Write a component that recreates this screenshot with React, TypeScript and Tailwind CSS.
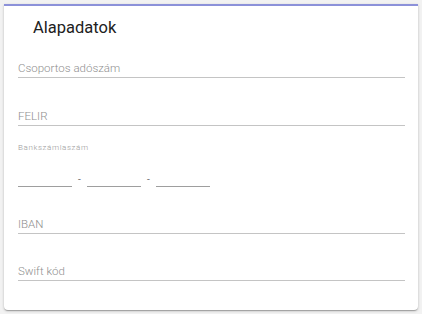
import React from "react";

const Field: React.FC<{ label: string; className?: string }> = ({ label, className }) => (
  <div className={`border-b border-[#c4c4c4] pb-[1px] ${className ?? ""}`}>
    <div className="text-[11.5px] leading-4 font-light text-[#8f8f8f]">{label}</div>
  </div>
);

const App: React.FC = () => {
  const segments = [0, 1, 2];

  return (
    <div
      className="w-[422px] h-[314px] bg-[#f2f2f2] p-1"
      style={{ fontFamily: "Roboto, 'Liberation Sans', sans-serif" }}
    >
      <div className="h-[306px] bg-white border-t-2 border-[#8c91d9] rounded-b-sm shadow-[0_1px_3px_rgba(0,0,0,0.2),0_1px_1px_rgba(0,0,0,0.14),0_2px_1px_-1px_rgba(0,0,0,0.12)] pl-[14px] pr-[13px]">
        <h2 className="pt-3 pl-[15px] text-[16.5px] leading-5 text-[#212121] font-normal">Alapadatok</h2>

        <Field label="Csoportos adószám" className="mt-[22px]" />
        <Field label="FELIR" className="mt-[30px]" />

        <div className="mt-[17px] text-[8px] leading-[10px] font-light text-[#9a9a9a] tracking-[0.6px]">Bankszámlaszám</div>
        <div className="mt-[13px] flex items-end">
          {segments.map((i) => (
            <React.Fragment key={i}>
              {i > 0 && (
                <span className="w-[15px] text-center text-[10px] leading-3 text-[#757575] mb-[1px]">-</span>
              )}
              <div className="w-[54px] h-[21px] border-b border-[#9e9e9e]" />
            </React.Fragment>
          ))}
        </div>

        <Field label="IBAN" className="mt-[29px]" />
        <Field label="Swift kód" className="mt-[29px]" />
      </div>
    </div>
  );
};

export default App;
